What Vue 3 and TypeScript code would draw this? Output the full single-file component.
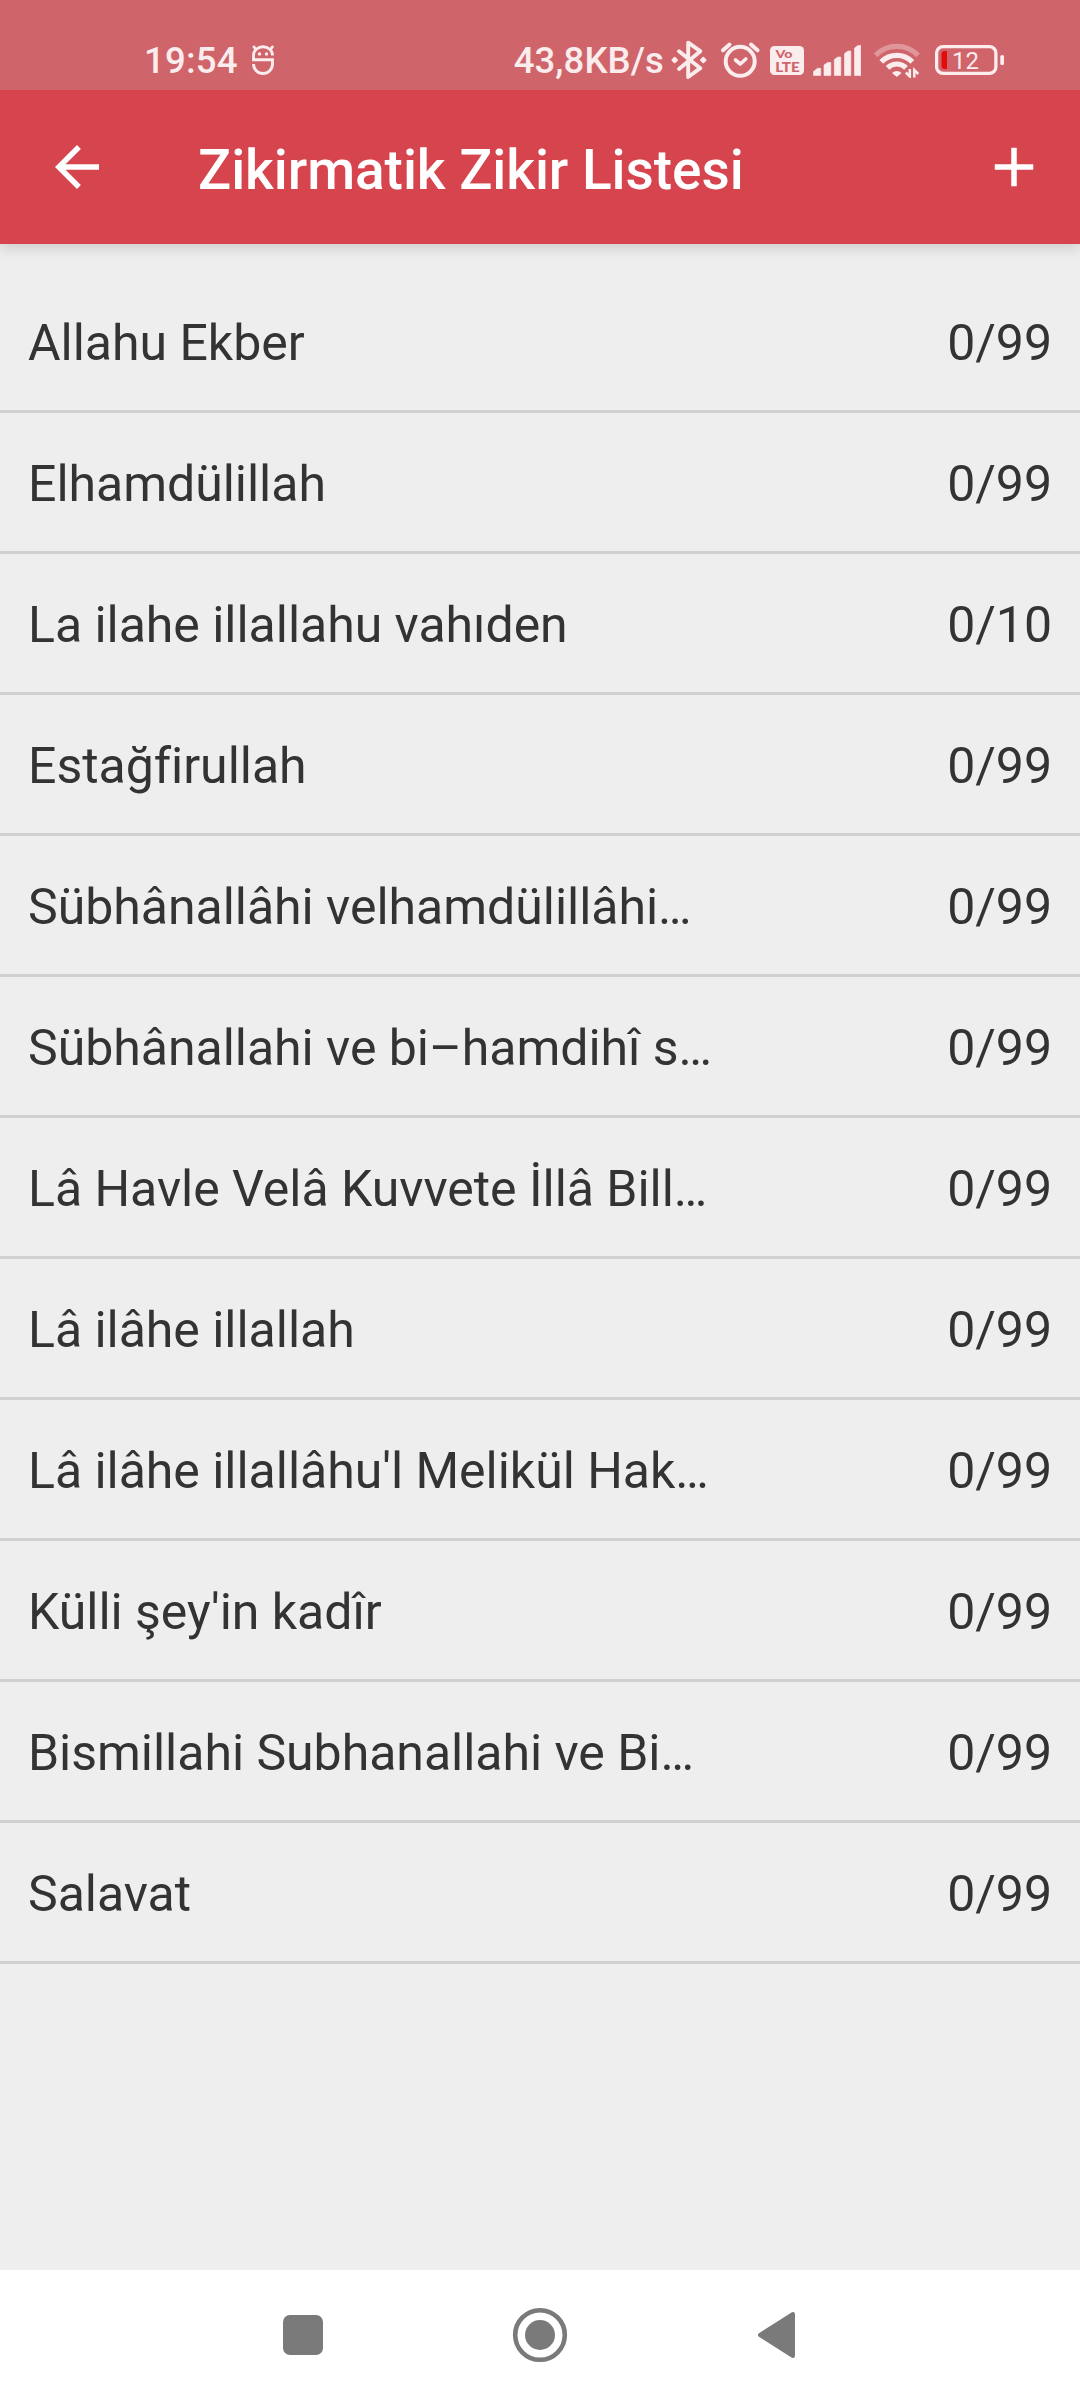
<script setup lang="ts">
interface Zikir {
  name: string
  count: number
  target: number
}

const items: Zikir[] = [
  { name: 'Allahu Ekber', count: 0, target: 99 },
  { name: 'Elhamdülillah', count: 0, target: 99 },
  { name: 'La ilahe illallahu vahıden', count: 0, target: 10 },
  { name: 'Estağfirullah', count: 0, target: 99 },
  { name: 'Sübhânallâhi velhamdülillâhi…', count: 0, target: 99 },
  { name: 'Sübhânallahi ve bi–hamdihî s…', count: 0, target: 99 },
  { name: 'Lâ Havle Velâ Kuvvete İllâ Bill…', count: 0, target: 99 },
  { name: 'Lâ ilâhe illallah', count: 0, target: 99 },
  { name: "Lâ ilâhe illallâhu'l Melikül Hak…", count: 0, target: 99 },
  { name: "Külli şey'in kadîr", count: 0, target: 99 },
  { name: 'Bismillahi Subhanallahi ve Bi…', count: 0, target: 99 },
  { name: 'Salavat', count: 0, target: 99 },
]
</script>

<template>
  <div class="screen">
    <div class="status">
      <div class="status-left">
        <span class="clock">19:54</span>
        <svg class="face" width="24" height="34" viewBox="251 43 24 34" fill="none" stroke="#fbeced" stroke-width="2.900">
          <path d="M272.500 55.500a9.500 8.800 0 0 0-19 0v4.200h19v4.300a9.500 9.500 0 0 1-19 0" />
          <path d="M255.500 49l-1.500-2M270.800 49l1.500-2" stroke-linecap="round" />
          <circle cx="259.500" cy="54" r="1.700" fill="#fbeced" stroke="none" />
          <circle cx="266.500" cy="54" r="1.700" fill="#fbeced" stroke="none" />
        </svg>
      </div>
      <div class="status-right">
        <span class="net">43,8KB/s</span>
        <svg width="40" height="44" viewBox="669 38 40 44" fill="none" stroke="#fbeced" stroke-width="3.900" stroke-linecap="round" stroke-linejoin="round">
          <path d="M679 51.200L700.300 68.200L688.200 77V42.700L700.300 51.200L679 69" />
          <path d="M674.700 57.800l2.300 2.300-2.300 2.300-2.300-2.300zM703.300 57.800l2.300 2.300-2.300 2.300-2.300-2.300z" fill="#fbeced" stroke-width="2" />
        </svg>
        <svg width="44" height="44" viewBox="718 38 44 44" fill="none" stroke="#fbeced" stroke-width="4" stroke-linecap="round">
          <circle cx="740.200" cy="61.300" r="14.500" />
          <path d="M723 50.300l6.500-5.800M751 44.500l6.500 5.800" />
          <path d="M735.500 60l4.800 4 5.500-5" stroke-width="3.600" stroke-linejoin="round" />
        </svg>
        <svg class="volte" width="34" height="30" viewBox="770 46 34 30">
          <rect x="770" y="46" width="34" height="29" rx="4.500" fill="#fbeced" />
          <text x="775.500" y="58.400" class="vo" textLength="17" lengthAdjust="spacingAndGlyphs">Vo</text>
          <text x="775.200" y="71.500" class="lte" textLength="24.500" lengthAdjust="spacingAndGlyphs">LTE</text>
        </svg>
        <svg class="signal" width="48" height="32" viewBox="813 44 48 32" fill="#fbeced">
          <path d="M813.500 75.500v-4l4-3.200h3.200v7.200zM824 75.500v-10.500l3.500-2.500h3.300v13zM834.300 75.500V59.500l3.500-2.500h3v18.500zM844.500 75.500V53.500l3.500-2.500h2.800v24.500zM854.500 75.500V48l3.500-2.500h2.800v30z" stroke="#fbeced" stroke-width=".6" stroke-linejoin="round" />
        </svg>
        <svg class="wifi" width="48" height="36" viewBox="873 42 48 36" fill="none" stroke="#fbeced" stroke-width="5.200">
          <path d="M875.600 55.400a29.500 29.500 0 0 1 42.400 0" opacity=".37" />
          <path d="M881.300 61.800a21.800 21.800 0 0 1 31 0" />
          <path d="M887.600 67.800a13 13 0 0 1 18.400 0" />
          <path d="M892 73a7 7 0 0 1 9.600 0l-4.800 4z" fill="#fbeced" stroke="none" />
          <path d="M905.800 72.500l4 4v-7.500M918.300 74l-4-4v7.500" stroke-width="2.500" />
        </svg>
        <svg class="battery" width="70" height="32" viewBox="935 44 70 32">
          <rect x="936.600" y="46.600" width="59.300" height="26.800" rx="6.500" fill="none" stroke="#fbeced" stroke-width="3.300" />
          <path d="M947 51v18h-2.500a3 3 0 0 1-3-3V54a3 3 0 0 1 3-3z" fill="#e60b0b" />
          <rect x="1000.300" y="55" width="3.700" height="10" rx="1.500" fill="#fbeced" />
          <text x="952" y="69" class="level">12</text>
        </svg>
      </div>
    </div>

    <header class="bar">
      <svg width="66" height="66" viewBox="0 0 24 24" fill="#fff">
        <path d="M20 11H7.830l5.590-5.590L12 4l-8 8 8 8 1.410-1.410L7.830 13H20v-2z" />
      </svg>
      <h1>Zikirmatik Zikir Listesi</h1>
      <svg width="66" height="66" viewBox="0 0 24 24" fill="#fff">
        <path d="M19 13h-6v6h-2v-6H5v-2h6V5h2v6h6v2z" />
      </svg>
    </header>

    <main>
      <ul>
        <li v-for="item in items" :key="item.name">
          <span>{{ item.name }}</span>
          <span>{{ item.count }}/{{ item.target }}</span>
        </li>
      </ul>
    </main>

    <nav>
      <svg width="60" height="60" viewBox="0 0 60 60" fill="#7a7a7a">
        <rect x="10" y="10" width="40" height="40" rx="7" />
      </svg>
      <svg width="60" height="60" viewBox="0 0 60 60" fill="#7a7a7a">
        <circle cx="30" cy="30" r="24.800" fill="none" stroke="#7a7a7a" stroke-width="4.600" />
        <circle cx="30" cy="30" r="15" />
      </svg>
      <svg width="60" height="60" viewBox="0 0 60 60" fill="#7a7a7a" stroke="#7a7a7a" stroke-width="4" stroke-linejoin="round">
        <path d="M13 30L46 9v42z" />
      </svg>
    </nav>
  </div>
</template>

<style>
body {
  margin: 0;
}
</style>

<style scoped>
.screen {
  width: 1080px;
  height: 2400px;
  display: flex;
  flex-direction: column;
  background: #eee;
  font-family: Roboto, "Noto Sans", sans-serif;
  overflow: hidden;
}
svg {
  display: block;
  flex: none;
}
.status {
  box-sizing: border-box;
  height: 90px;
  flex: none;
  padding: 38px 75px 0 144px;
  display: flex;
  justify-content: space-between;
  background: #cf646a;
  color: #fbeced;
  font-size: 36.5px;
  font-weight: 500;
  line-height: 46px;
  z-index: 2;
}
.status-left,
.status-right {
  display: flex;
  height: 44px;
  align-items: flex-start;
}
.clock {
  width: 94px;
  letter-spacing: 0.2px;
}
.face {
  margin: 5px 0 0 13px;
}
.net {
  margin-right: 5px;
  letter-spacing: 0.1px;
}
.status-right svg + svg {
  margin-left: 9px;
}
.status-right .volte {
  margin: 8px 0 0 8px;
}
.status-right .signal {
  margin: 6px 0 0 9px;
}
.status-right .wifi {
  margin: 4px 0 0 12px;
}
.status-right .battery {
  margin: 6px 0 0 14px;
}
.volte text {
  font-family: Lato, sans-serif;
  font-weight: 900;
  fill: #cf646a;
}
.vo {
  font-size: 11px;
}
.lte {
  font-size: 12.3px;
}
.level {
  font: 400 24px Roboto, sans-serif;
  fill: #fbeced;
}
.bar {
  box-sizing: border-box;
  height: 154px;
  flex: none;
  padding: 0 33px 0 44px;
  display: flex;
  align-items: center;
  background: #d6444e;
  box-shadow: 0 4px 13px rgba(0, 0, 0, 0.14);
  z-index: 1;
}
h1 {
  flex: 1;
  margin: 5px 0 0 88px;
  color: #fff;
  font-size: 55px;
  line-height: 66px;
  font-weight: 500;
  letter-spacing: -0.04px;
  white-space: nowrap;
}
main {
  flex: 1;
  padding-top: 28px;
}
ul {
  margin: 0;
  padding: 0;
  list-style: none;
}
li {
  box-sizing: border-box;
  height: 141px;
  padding: 4px 28px 0;
  border-bottom: 3px solid #d0d0d0;
  display: flex;
  align-items: center;
  justify-content: space-between;
  color: #333;
  font-size: 50px;
  letter-spacing: -0.03px;
  font-variant-ligatures: none;
  white-space: nowrap;
}
nav {
  height: 130px;
  flex: none;
  display: flex;
  justify-content: center;
  align-items: center;
  gap: 177px;
  background: #fff;
}
</style>
